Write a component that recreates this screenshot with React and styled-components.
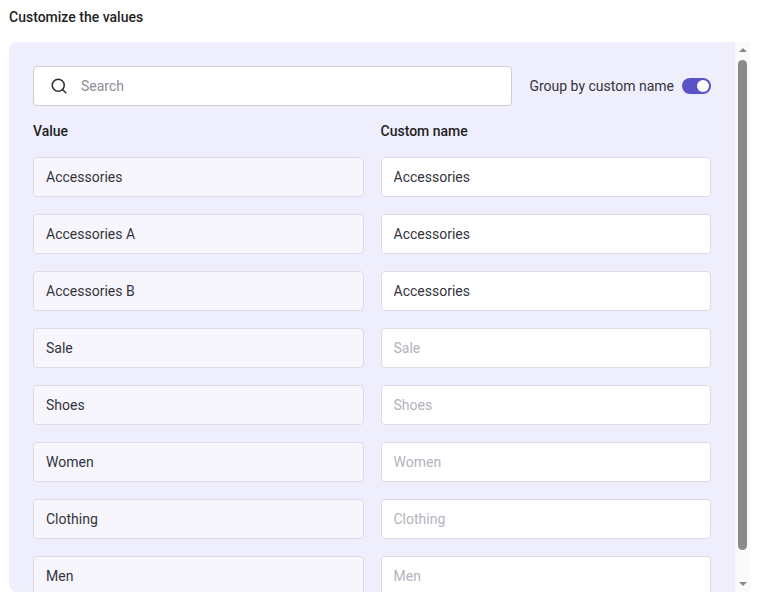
import React, { useState } from 'react';
import styled, { createGlobalStyle } from 'styled-components';

const Global = createGlobalStyle`
  body {
    margin: 0;
    background: #fff;
    font-family: Roboto, "Liberation Sans", sans-serif;
    color: #34343c;
  }
`;

const Page = styled.div`
  padding: 8px 20px 0 9px;
`;

const Title = styled.div`
  font-size: 14px;
  font-weight: 500;
  color: #1f1f24;
  line-height: 18px;
  margin-bottom: 16px;
`;

const Frame = styled.div`
  display: flex;
  height: 550px;
  width: 741px;
`;

const Panel = styled.div`
  flex: 1;
  overflow: hidden;
  background: #efeefc;
  border-radius: 8px 0 0 8px;
  box-sizing: border-box;
  padding: 24px;
`;

const ScrollTrack = styled.div`
  width: 15px;
  background: #fafafa;
  display: flex;
  flex-direction: column;
  align-items: center;
`;

const Arrow = styled.div`
  width: 0;
  height: 0;
  border-left: 4px solid transparent;
  border-right: 4px solid transparent;
  ${p => (p.$down ? 'border-top: 4px solid #8a8a8a;' : 'border-bottom: 4px solid #8a8a8a;')}
  margin: ${p => (p.$down ? '0 0 6px' : '6px 0 0')};
`;

const Thumb = styled.div`
  width: 9px;
  border-radius: 5px;
  background: #8a8a8a;
  height: 490px;
  margin: 8px 0 auto;
`;

const TopBar = styled.div`
  display: flex;
  align-items: center;
  gap: 17px;
`;

const SearchBox = styled.label`
  flex: 1;
  height: 40px;
  box-sizing: border-box;
  background: #fff;
  border: 1px solid #cfced8;
  border-radius: 4px;
  display: flex;
  align-items: center;
  padding-left: 16px;
  gap: 11px;
`;

const SearchInput = styled.input`
  border: none;
  outline: none;
  font: 14px Roboto, "Liberation Sans", sans-serif;
  flex: 1;
  background: transparent;
  &::placeholder { color: #8d8d96; }
`;

const ToggleLabel = styled.div`
  display: flex;
  align-items: center;
  gap: 8px;
  font-size: 14px;
  color: #34343c;
`;

const Switch = styled.button`
  width: 29px;
  height: 16px;
  border-radius: 8px;
  border: none;
  padding: 0;
  background: ${p => (p.$on ? '#5b52c7' : '#bdbdc7')};
  position: relative;
  cursor: pointer;
  &::after {
    content: '';
    position: absolute;
    top: 2px;
    left: ${p => (p.$on ? '15px' : '2px')};
    width: 12px;
    height: 12px;
    border-radius: 50%;
    background: #fff;
  }
`;

const Grid = styled.div`
  display: grid;
  grid-template-columns: 1fr 1fr;
  column-gap: 17px;
  row-gap: 17px;
  margin-top: 17px;
`;

const Header = styled.div`
  font-size: 14px;
  font-weight: 500;
  color: #1f1f24;
  line-height: 16px;
  margin-bottom: 1px;
`;

const Field = styled.input`
  height: 40px;
  box-sizing: border-box;
  border: 1px solid #dddce6;
  border-radius: 4px;
  padding: 0 12px;
  font: 14px Roboto, "Liberation Sans", sans-serif;
  color: #34343c;
  background: ${p => (p.$readOnly ? '#f7f6fc' : '#fff')};
  outline: none;
  width: 100%;
  &::placeholder { color: #b3b3bc; }
`;

const rows = [
  ['Accessories', 'Accessories'],
  ['Accessories A', 'Accessories'],
  ['Accessories B', 'Accessories'],
  ['Sale', ''],
  ['Shoes', ''],
  ['Women', ''],
  ['Clothing', ''],
  ['Men', ''],
  ['Kids', ''],
  ['Bags', ''],
];

const SearchIcon = () => (
  <svg width="18" height="18" viewBox="0 0 24 24" fill="none" stroke="#2b2b33" strokeWidth="2" strokeLinecap="round">
    <circle cx="11" cy="11" r="8" />
    <path d="M21 21l-4.3-4.3" />
  </svg>
);

export default function App() {
  const [on, setOn] = useState(true);
  return (
    <Page>
      <Global />
      <Title>Customize the values</Title>
      <Frame>
        <Panel>
          <TopBar>
            <SearchBox>
              <SearchIcon />
              <SearchInput placeholder="Search" />
            </SearchBox>
            <ToggleLabel>
              Group by custom name
              <Switch $on={on} onClick={() => setOn(!on)} />
            </ToggleLabel>
          </TopBar>
          <Grid>
            <Header>Value</Header>
            <Header>Custom name</Header>
            {rows.map(([v, c]) => (
              <React.Fragment key={v}>
                <Field $readOnly readOnly value={v} />
                <Field defaultValue={c} placeholder={v} />
              </React.Fragment>
            ))}
          </Grid>
        </Panel>
        <ScrollTrack>
          <Arrow />
          <Thumb />
          <Arrow $down />
        </ScrollTrack>
      </Frame>
    </Page>
  );
}
